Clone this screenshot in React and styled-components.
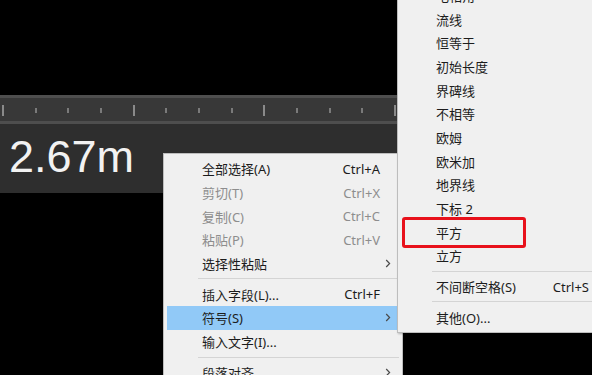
import React from 'react'
import styled, { createGlobalStyle } from 'styled-components'

const GlobalStyle = createGlobalStyle`
  html, body {
    margin: 0;
    padding: 0;
    background: #000;
    overflow: hidden;
  }
`

const mainItems = [
  { label: '全部选择(A)', shortcut: 'Ctrl+A' },
  { label: '剪切(T)', shortcut: 'Ctrl+X', disabled: true },
  { label: '复制(C)', shortcut: 'Ctrl+C', disabled: true },
  { label: '粘贴(P)', shortcut: 'Ctrl+V', disabled: true },
  { label: '选择性粘贴', sub: true },
  { sep: true },
  { label: '插入字段(L)...', shortcut: 'Ctrl+F' },
  { label: '符号(S)', sub: true, active: true },
  { label: '输入文字(I)...' },
  { sep: true },
  { label: '段落对齐', sub: true },
]

const symbolItems = [
  { label: '电相角' },
  { label: '流线' },
  { label: '恒等于' },
  { label: '初始长度' },
  { label: '界碑线' },
  { label: '不相等' },
  { label: '欧姆' },
  { label: '欧米加' },
  { label: '地界线' },
  { label: '下标 2' },
  { label: '平方' },
  { label: '立方' },
  { sep: true },
  { label: '不间断空格(S)', shortcut: 'Ctrl+S' },
  { sep: true },
  { label: '其他(O)...' },
]

const Chevron = () => (
  <svg width="6" height="9" viewBox="0 0 6 9">
    <path d="M1.2 1 L4.6 4.5 L1.2 8" fill="none" stroke="#4a4a4a" strokeWidth="1.2" />
  </svg>
)

const Menu = ({ items, className }) => (
  <MenuBox className={className}>
    {items.map((it, i) =>
      it.sep ? (
        <Separator key={i} />
      ) : (
        <Item key={i} $active={it.active} $disabled={it.disabled}>
          <Label>{it.label}</Label>
          {it.shortcut && <Shortcut>{it.shortcut}</Shortcut>}
          {it.sub && <Arrow><Chevron /></Arrow>}
        </Item>
      )
    )}
  </MenuBox>
)

const App = () => {
  const ticks = Array.from({ length: 19 })
  return (
    <>
      <GlobalStyle />
      <Screen>
        <Canvas />
        <Ruler>
          {ticks.map((_, i) => (
            <TickCell key={i}>
              <Tick $major={i % 4 === 0} />
            </TickCell>
          ))}
        </Ruler>
        <Readout>2.67m</Readout>
        <Canvas $grow />

        <MainMenu items={mainItems} />
        <SymbolMenu items={symbolItems} />
        <Highlight />
      </Screen>
    </>
  )
}

const Screen = styled.div`
  position: relative;
  width: 592px;
  height: 375px;
  overflow: hidden;
  background: #000;
  display: flex;
  flex-direction: column;
  font-family: "Noto Sans", "Noto Sans CJK SC", sans-serif;
`

const Canvas = styled.div`
  height: 95px;
  flex: ${({ $grow }) => ($grow ? '1' : 'none')};
  background: #000;
`

const Ruler = styled.div`
  height: 23px;
  background: #383838;
  border-top: 3px solid #4e4e4e;
  border-bottom: 3px solid #4e4e4e;
  display: flex;
  padding-left: 2px;
`

const TickCell = styled.div`
  flex: none;
  width: 32.67px;
  display: flex;
  align-items: center;
`

const Tick = styled.div`
  width: 2px;
  height: ${({ $major }) => ($major ? '11px' : '5px')};
  margin-top: 1px;
  background: ${({ $major }) => ($major ? '#8a8a8a' : '#7a7a7a')};
`

const Readout = styled.div`
  height: 69px;
  background: #2e2e2e;
  color: #f2f2f2;
  font-family: "Liberation Sans", Arial, sans-serif;
  font-size: 45px;
  line-height: 1;
  padding: 10px 0 0 9px;
  box-sizing: border-box;
`

const MenuBox = styled.div`
  position: absolute;
  box-sizing: border-box;
  background: #f0f0f0;
  border: 1px solid #bdbdbd;
  padding: 4px 3px;
  font-size: 13px;
  box-shadow: 1px 1px 2px rgba(0, 0, 0, 0.25);
`

const MainMenu = styled(Menu)`
  left: 163px;
  top: 153px;
  width: 240px;
  padding-top: 3px;
`

const SymbolMenu = styled(Menu)`
  left: 397px;
  top: -20.5px;
  width: 215px;
  padding-top: 3px;
  padding-bottom: 3px;
`

const Item = styled.div`
  height: 23.7px;
  display: flex;
  align-items: center;
  padding: 0 0 0 35px;
  color: ${({ $disabled }) => ($disabled ? '#8d8d8d' : '#1c1c1c')};
  background: ${({ $active }) => ($active ? '#91c9f7' : 'transparent')};
  white-space: nowrap;
`

const Label = styled.span`
  flex: 1;
`

const Shortcut = styled.span`
  padding-right: 19px;
`

const Arrow = styled.span`
  width: 14px;
  display: flex;
  align-items: center;
  padding-left: 8px;
`

const Separator = styled.div`
  height: 7px;
  display: flex;
  align-items: center;
  margin-left: 31px;
  &::after {
    content: '';
    flex: 1;
    height: 1px;
    background: #d4d4d4;
  }
`

const Highlight = styled.div`
  position: absolute;
  left: 402px;
  top: 217px;
  width: 124px;
  height: 31px;
  box-sizing: border-box;
  border: 3px solid #e8111b;
  border-radius: 3px;
`

export default App
